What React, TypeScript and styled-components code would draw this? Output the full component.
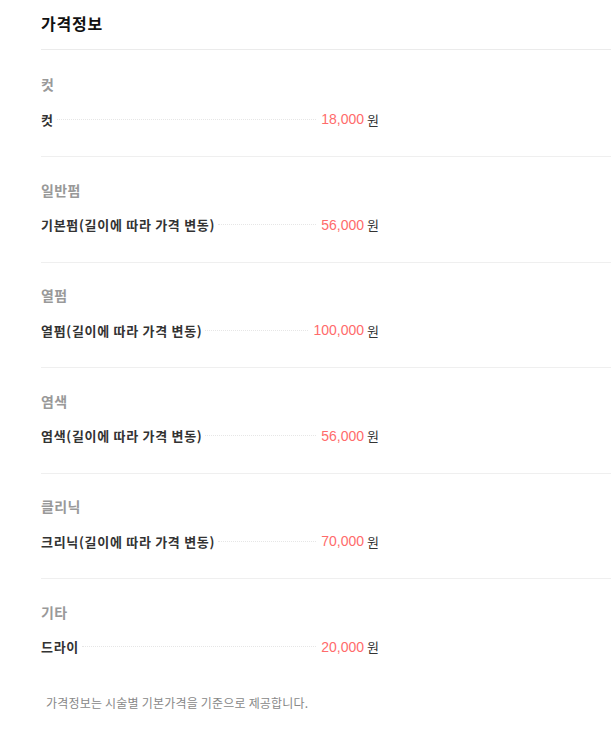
import styled, { createGlobalStyle } from "styled-components";

type PriceItem = {
  name: string;
  price: string;
}

type PriceGroup = {
  category: string;
  items: PriceItem[];
}

const groups: PriceGroup[] = [
  { category: "컷", items: [{ name: "컷", price: "18,000" }] },
  { category: "일반펌", items: [{ name: "기본펌(길이에 따라 가격 변동)", price: "56,000" }] },
  { category: "열펌", items: [{ name: "열펌(길이에 따라 가격 변동)", price: "100,000" }] },
  { category: "염색", items: [{ name: "염색(길이에 따라 가격 변동)", price: "56,000" }] },
  { category: "클리닉", items: [{ name: "크리닉(길이에 따라 가격 변동)", price: "70,000" }] },
  { category: "기타", items: [{ name: "드라이", price: "20,000" }] },
];

const GlobalStyle = createGlobalStyle`
  body {
    margin: 0;
    background: #fff;
    font-family: "Noto Sans CJK KR", "Noto Sans", sans-serif;
  }
`

const Page = styled.div`
  padding-left: 41px;
`

const Header = styled.div`
  padding: 13px 0 16px;
  border-bottom: 1px solid #ebebeb;

  h2 {
    margin: 0;
    font-size: 16px;
    line-height: 20px;
    font-weight: 700;
    letter-spacing: 0.8px;
    color: #111;
  }
`

const Section = styled.div<{ $first?: boolean; $last?: boolean }>`
  padding: ${({ $first }) => ($first ? "24px" : "22.5px")} 0 27px;
  border-bottom: ${({ $last }) => ($last ? "none" : "1px solid #efefef")};
`

const Category = styled.h3`
  margin: 0 0 15px;
  font-size: 14px;
  line-height: 20px;
  font-weight: 700;
  letter-spacing: 0.4px;
  color: #999;
`

const Row = styled.div`
  display: flex;
  align-items: center;
  width: 338px;
  height: 20px;
`

const ItemName = styled.span`
  font-size: 13px;
  font-weight: 700;
  letter-spacing: 0.7px;
  color: #333;
  white-space: nowrap;
`

const Leader = styled.span`
  flex: 1;
  margin: 0 5px 0 3px;
  border-top: 1px dotted #e6e6e6;
`

const Price = styled.span`
  font-family: "Liberation Sans", Arial, sans-serif;
  font-size: 14px;
  color: #ff6b6b;
`

const Won = styled.span`
  margin-left: 3px;
  font-size: 13px;
  color: #333;
`

const Notice = styled.p`
  margin: 11px 0 0 5px;
  font-size: 12px;
  line-height: 16px;
  letter-spacing: 0.2px;
  color: #888;
`

export default function App() {
  return (
    <>
      <GlobalStyle />
      <Page>
        <Header>
          <h2>가격정보</h2>
        </Header>
        {groups.map((group, i) => (
          <Section
            key={group.category}
            $first={i === 0}
            $last={i === groups.length - 1}
          >
            <Category>{group.category}</Category>
            {group.items.map((item) => (
              <Row key={item.name}>
                <ItemName>{item.name}</ItemName>
                <Leader />
                <Price>{item.price}</Price>
                <Won>원</Won>
              </Row>
            ))}
          </Section>
        ))}
        <Notice>가격정보는 시술별 기본가격을 기준으로 제공합니다.</Notice>
      </Page>
    </>
  )
}
